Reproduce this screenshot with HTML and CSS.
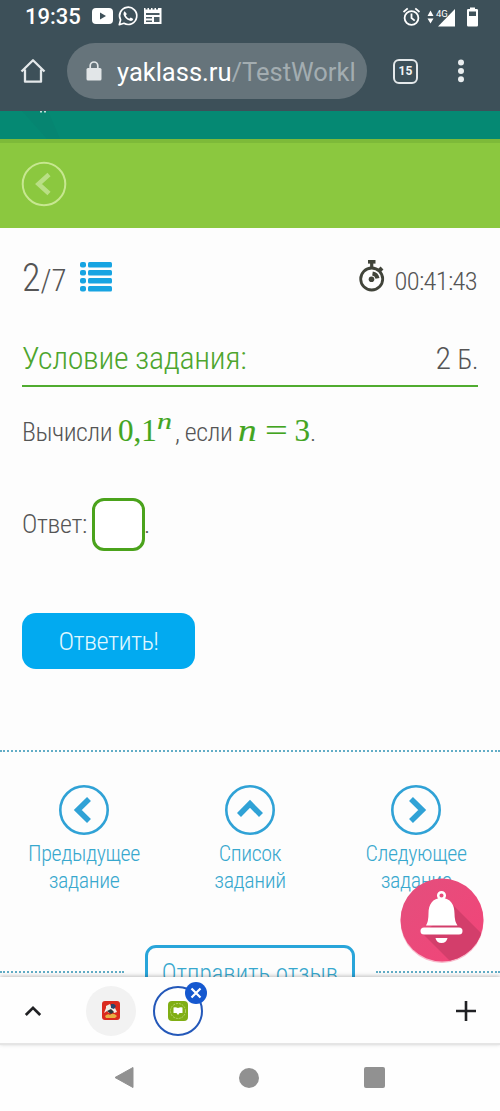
FILE: index.html
```
<!DOCTYPE html>
<html lang="ru">
<head>
<meta charset="utf-8">
<title>ЯКласс</title>
<link rel="stylesheet" href="styles.css">
</head>
<body>
<div class="screen">
  <header class="chrome">
    <div class="status">
      <span class="clock">19:35</span>
      <svg class="status-left" width="72" height="22" viewBox="0 0 72 22">
        <rect x="0" y="3" width="21" height="16" rx="4" fill="#fff"/>
        <path d="M8 7.500l6 3.500-6 3.500z" fill="#3e5059"/>
        <path d="M27.300 19.700l1.300-4.800a8.600 8.600 0 1 1 3.300 3.400z" fill="none" stroke="#fff" stroke-width="1.700" stroke-linejoin="round"/>
        <path d="M32.700 6.200l2.100 2.700-1 1.600q1.200 2.300 3.400 3.200l1.600-1.100 2.500 1.500c-.5 2-2.300 2.200-4 1.500-3-1.200-5.200-3.400-5.800-6 0-1.500.4-2.800 1.200-3.400z" fill="#fff"/>
        <path d="M52 3h1.500v1.500h2V3H57v1.500h2V3h1.500v1.500h2V3H64v1.500h2V3h3.500v16H52z" fill="#fff"/>
        <path d="M54 8h13.500v2H54zM54 12h6v1.500h-6zM54 15.500h6V17h-6zM62 12h5.500v5H62z" fill="#4b5c64"/>
      </svg>
      <svg class="status-right" width="78" height="22" viewBox="0 0 78 22">
        <g fill="none" stroke="#fff" stroke-width="1.800">
          <circle cx="8.500" cy="12" r="6.900"/>
          <path d="M8.500 7.500V12l3.200 2.600M.5 6l4.200-3.600M16.500 6l-4.200-3.600"/>
        </g>
        <path d="M24.500 10l3-5.500 3 5.500zM24.500 12.500h6l-3 5z" fill="#fff"/>
        <path d="M35 20.500L52 3v17.500z" fill="#fff"/>
        <text x="33" y="10.500" class="network">4G</text>
        <path d="M67 3V1.500h5V3h1.800q1.200 0 1.200 1.200v15.100q0 1.200-1.200 1.200H65.200q-1.200 0-1.200-1.200V4.200Q64 3 65.200 3z" fill="#fff"/>
        <path d="M66 5.500h7V10h-7z" fill="#3f525a"/>
      </svg>
    </div>
    <div class="toolbar">
      <svg class="home" width="26" height="26" viewBox="0 0 26 26" fill="none" stroke="#e4e8ea" stroke-width="2.300"><path d="M1.500 13.500L13 2.200l11.500 11.300M5 11.500V23.700h16V11.500" stroke-linejoin="round"/></svg>
      <div class="address">
        <svg width="16" height="20" viewBox="0 0 16 20"><rect x=".5" y="7" width="15" height="12.500" rx="1.500" fill="#e2e6e8"/><path d="M4.200 8V4.800a3.800 3.800 0 0 1 7.600 0V8" fill="none" stroke="#e2e6e8" stroke-width="1.700"/></svg>
        <span class="url">yaklass.ru<span class="path">/TestWorkl</span></span>
      </div>
      <span class="tabs">15</span>
      <svg class="more" width="8" height="24" viewBox="0 0 8 24" fill="#e9edef"><circle cx="4" cy="3.400" r="3"/><circle cx="4" cy="11.900" r="3"/><circle cx="4" cy="20.200" r="3"/></svg>
    </div>
  </header>

  <div class="site-top"><svg width="60" height="28" viewBox="0 0 60 28"><path d="M22 0H48L60 28H47z" fill="#08806f" opacity=".4"/><path d="M40 0h2v1.500h-2zM44 0h2v1.500h-2z" fill="#bfe0da"/></svg></div>
  <div class="site-nav">
    <svg width="46" height="46" viewBox="0 0 46 46" fill="none" stroke="#c7e790"><circle cx="23" cy="23" r="21.300" stroke-width="2"/><path d="M28 13.500L17.500 23 28 32.500" stroke="#b9df85" stroke-width="4.600"/></svg>
  </div>

  <main class="page">
    <div class="progress">
      <div class="counter"><span class="current">2</span><span class="total">/7</span></div>
      <svg class="list-icon" width="32" height="30" viewBox="0 0 32 30" fill="#17a4e2">
        <rect y="0" width="6" height="5.600" rx="2"/><rect x="8" y="0" width="24" height="5.600" rx="1.500"/>
        <rect y="8" width="6" height="5.600" rx="2"/><rect x="8" y="8" width="24" height="5.600" rx="1.500"/>
        <rect y="16" width="6" height="5.600" rx="2"/><rect x="8" y="16" width="24" height="5.600" rx="1.500"/>
        <rect y="24" width="6" height="5.600" rx="2"/><rect x="8" y="24" width="24" height="5.600" rx="1.500"/>
      </svg>
      <svg class="stopwatch" width="26" height="33" viewBox="0 0 26 33" fill="none" stroke="#41443a">
        <circle cx="12.700" cy="20" r="11" stroke-width="2.800"/>
        <path d="M9 2.800h7.500" stroke-width="3.600"/><path d="M12.700 4v5" stroke-width="3.200"/><path d="M20.500 11.500l2.500-2.500" stroke-width="4"/>
        <circle cx="12.500" cy="20.200" r="2.800" fill="#41443a" stroke="none"/>
        <path d="M13.500 14.500a6 6 0 0 1 5 4.800" stroke-width="4"/>
      </svg>
      <span class="time">00:41:43</span>
    </div>
    <div class="heading"><h1>Условие задания:</h1><span class="points">2 <small>Б.</small></span></div>
    <p class="question"><span class="w-calc">Вычисли</span><span class="math power">0,1<sup>n</sup></span><span class="w-if">, если</span><span class="math equation"><i>n</i><b>=</b>3</span><span>.</span></p>
    <div class="answer"><span class="label">Ответ:</span><input class="box" aria-label="Ответ"><span>.</span></div>
    <button class="submit">Ответить!</button>
  </main>

  <nav class="tasks">
    <a class="task"><svg width="50" height="50" viewBox="0 0 50 50"><circle cx="25" cy="25" r="23.700"/><path d="M30 14L18.800 25 30 36"/></svg><span>Предыдущее<br>задание</span></a>
    <a class="task"><svg width="50" height="50" viewBox="0 0 50 50"><circle cx="25" cy="25" r="23.700"/><path d="M14 30L25 18.800 36 30"/></svg><span>Список<br>заданий</span></a>
    <a class="task"><svg width="50" height="50" viewBox="0 0 50 50"><circle cx="25" cy="25" r="23.700"/><path d="M20 14L31.200 25 20 36"/></svg><span>Следующее<br>задание</span></a>
  </nav>
  <div class="feedback"><i class="rule left"></i><button class="review">Отправить отзыв</button><i class="rule right"></i></div>

  <svg class="bell" width="86" height="90" viewBox="0 0 86 90">
    <defs>
      <linearGradient id="pink" x1="0" y1="0" x2="1" y2="1"><stop offset="0" stop-color="#e34f7d"/><stop offset="1" stop-color="#f34478"/></linearGradient>
      <clipPath id="disc"><circle cx="43" cy="43" r="41.500"/></clipPath>
    </defs>
    <circle cx="43" cy="44.500" r="41.500" fill="#f8bacb"/>
    <circle cx="43" cy="43" r="41.500" fill="url(#pink)"/>
    <path clip-path="url(#disc)" d="M55 29L90 64v40H71L24 57z" fill="#d33e6b"/>
    <circle cx="42.500" cy="18.500" r="3.300" fill="none" stroke="#fff" stroke-width="2.500"/>
    <path d="M27 48.500q2.500-4 2.500-12c0-9 4-15.500 13-15.500s13 6.500 13 15.500q0 8 3 12z" fill="#fff"/>
    <rect x="21.500" y="50.500" width="42" height="7" rx="3.500" fill="#fff"/>
    <path d="M36.500 61h12q-1 5-6 5t-6-5z" fill="#fff"/>
  </svg>

  <div class="tab-strip">
    <svg class="chevron" width="18" height="12" viewBox="0 0 18 12" fill="none" stroke="#202124" stroke-width="2.700"><path d="M1.800 10L9 2.800l7.200 7.200"/></svg>
    <div class="site-tab">
      <svg width="18" height="19" viewBox="0 0 18 19"><rect width="18" height="19" rx="3" fill="#da2b1e"/><path d="M4 5l4-2 1 3 4 1 2 4-3 1-2-3-3 3-2-2-3 2 2-5z" fill="#f2eee6"/><path d="M9 3h3l2 2-2 3-3-1z" fill="#26486e"/><path d="M5 10l4-2 3 3-3 2z" fill="#2c383c"/><path d="M3 15q3-3 5-1 3-3 7 1l-2 2H4z" fill="#e8af42"/></svg>
    </div>
    <div class="site-tab active">
      <svg width="20" height="20" viewBox="0 0 20 20"><rect width="20" height="20" rx="4" fill="#80ae14"/><circle cx="10" cy="10" r="7.500" fill="none" stroke="#b7d46e" stroke-width="1" stroke-dasharray="2 1"/><path d="M5.500 6.500q2.500-.5 4.500.5 2-1 4.500-.5v5.500h-3L10 14l-1.500-2h-3z" fill="#fff"/></svg>
      <svg class="close" width="22" height="22" viewBox="0 0 22 22"><circle cx="11" cy="11" r="11" fill="#1558cf"/><path d="M6.500 6.500l9 9m0-9l-9 9" stroke="#fff" stroke-width="2.200"/></svg>
    </div>
    <svg class="plus" width="20" height="20" viewBox="0 0 20 20" stroke="#202124" stroke-width="2.600"><path d="M0 10h20M10 0v20"/></svg>
  </div>
  <div class="system-nav">
    <svg width="20" height="23" viewBox="0 0 20 23"><path d="M19 1.500v20L1 11.500z" fill="#919191" stroke="#919191" stroke-linejoin="round"/></svg>
    <i class="round"></i><i class="square"></i>
  </div>
</div>
</body>
</html>
```
FILE: styles.css
```
* { box-sizing: border-box; }
body { margin: 0; background: #fdfdfd; }
.screen {
  position: relative; width: 500px; height: 1111px; overflow: hidden;
  display: flex; flex-direction: column; background: #fdfdfd; color: #555;
  font-family: "Roboto Condensed", Roboto, sans-serif; font-weight: 300; font-stretch: 75%;
}
svg { display: block; flex: none; }
i { font-style: normal; }
.chrome { height: 111px; flex: none; background: #3d5059; font-family: Roboto, sans-serif; font-stretch: 100%; font-weight: 400; }
.status { height: 33px; display: flex; align-items: center; padding: 0 14px 0 25px; color: #fff; }
.clock { font-size: 22px; font-weight: 500; width: 67px; line-height: 33px; }
.status-left { margin-top: -1px; }
.status-right { margin-left: auto; margin-right: 5px; width: 78px; }
.network { font: 400 9.500px Roboto, sans-serif; fill: #fff; }
.toolbar { height: 78px; display: flex; align-items: center; padding: 0 35px 2px 20px; }
.address { margin-left: 21px; width: 300px; height: 56px; border-radius: 28px; background: #66747b; display: flex; align-items: center; padding-left: 19px; }
.url { margin-left: 15px; white-space: nowrap; color: #fff; font-size: 25.500px; line-height: 36px; padding-top: 1px; }
.path { color: #a3adb1; }
.tabs { margin-left: 26px; width: 25px; height: 25px; border: 2.500px solid #e4e8ea; border-radius: 6px; color: #f2f4f5; font: 700 12px/20px Roboto, sans-serif; text-align: center; }
.more { margin-left: auto; }
.site-top { height: 28px; flex: none; background: #058973; }
.site-nav { height: 89px; flex: none; background: #8bc83f; border-top: 4px solid #7dba39; padding: 18px 21px; }
.page { height: 522px; flex: none; padding: 0 22px; }
.progress { height: 102px; display: flex; align-items: flex-start; }
.counter { width: 58px; line-height: 46px; padding-top: 27px; white-space: nowrap; }
.current { font-size: 38px; }
.total { font-size: 31px; }
.list-icon { margin-top: 34px; }
.stopwatch { margin: 31px 0 0 auto; }
.time { font-size: 26.500px; letter-spacing: -.7px; line-height: 34px; margin: 36px 1px 0 10px; }
.heading { height: 57px; display: flex; align-items: center; justify-content: space-between; border-bottom: 2px solid #50ac30; }
h1 { margin: 0; font-size: 32px; font-weight: 300; letter-spacing: -.35px; color: #4da52e; line-height: 54px; }
.points { font-size: 32px; letter-spacing: -.4px; line-height: 54px; padding-top: 3px; }
.points small { font-size: 27px; }
.question { margin: 0; height: 90px; display: flex; align-items: baseline; font-size: 26px; letter-spacing: -.5px; line-height: 90px; white-space: pre; }
.w-calc { width: 96px; }
.w-if { width: 63px; }
.math { font-family: "Liberation Serif", serif; font-weight: 400; font-stretch: 100%; letter-spacing: 0; color: #43a51f; font-size: 31px; line-height: 80px; -webkit-text-stroke: .15px #43a51f; }
.power { width: 57px; }
.power sup { display: inline-block; font-size: 24px; font-style: italic; line-height: 0; vertical-align: 12px; transform: scaleX(1.25); transform-origin: left; }
.equation { display: flex; align-items: baseline; width: 72px; }
.equation i { font-style: italic; width: 27px; transform: scaleX(1.2); transform-origin: left; }
.equation b { font-weight: 400; width: 30px; transform: scaleX(1.3); transform-origin: left; }
.answer { height: 94px; display: flex; align-items: center; font-size: 26px; }
.label { width: 70px; letter-spacing: -.35px; }
.box { width: 53px; height: 53px; margin: 0; padding: 0; border: 3px solid #4ba31c; border-radius: 12px; background: #fff; }
.box + span { margin-left: -1px; }
button { font-family: inherit; font-weight: inherit; font-stretch: inherit; padding: 0; }
.submit { display: block; margin-top: 42px; width: 173px; height: 56px; border: 0; border-radius: 14px; background: #02aaf0; color: #e0f8ff; font-size: 26.500px; letter-spacing: -.6px; padding-bottom: 2px; }
.tasks { height: 195px; flex: none; border-top: 2px dotted #62adc6; padding-top: 33px; display: flex; justify-content: space-between; padding-left: 18px; padding-right: 18px; }
.task { width: 132px; display: flex; flex-direction: column; align-items: center; color: #38a8ce; text-align: center; font-size: 22px; letter-spacing: -.4px; line-height: 27px; }
.task svg { fill: none; stroke: #30a2d6; stroke-width: 2.600; margin-bottom: 5px; }
.task path { stroke-width: 5.600; }
.feedback { height: 32px; flex: none; display: flex; overflow: hidden; justify-content: space-between; }
.rule { width: 124px; height: 2px; margin-top: 26px; border-top: 2px dotted #62adc6; }
.review { width: 210px; height: 56px; flex: none; border: 3px solid #29a5da; border-radius: 11px; background: #fdfdfd; color: #38a8ce; font-size: 25px; }
.bell { position: absolute; left: 399px; top: 877px; }
.tab-strip { height: 68px; flex: none; display: flex; align-items: center; position: relative; border-bottom: 2px solid #e5e5e5; background: #fefefe; padding: 1px 24px 0; box-shadow: 0 -1px 4px rgba(0,0,0,.25); }
.site-tab { width: 50px; height: 50px; border-radius: 50%; background: #f2f2f2; margin-left: 44px; display: flex; align-items: center; justify-content: center; position: relative; }
.site-tab.active { margin-left: 17px; background: #fefefe; border: 2.500px solid #2458b9; }
.close { position: absolute; right: -6px; top: -6px; }
.plus { margin-left: auto; }
.system-nav { height: 66px; flex: none; display: flex; align-items: center; justify-content: space-between; padding: 0 115px 1px 114px; background: #fefefe; }
.round { width: 20px; height: 20px; border-radius: 50%; background: #919191; }
.square { width: 21px; height: 21px; border-radius: 2px; background: #919191; }
```
